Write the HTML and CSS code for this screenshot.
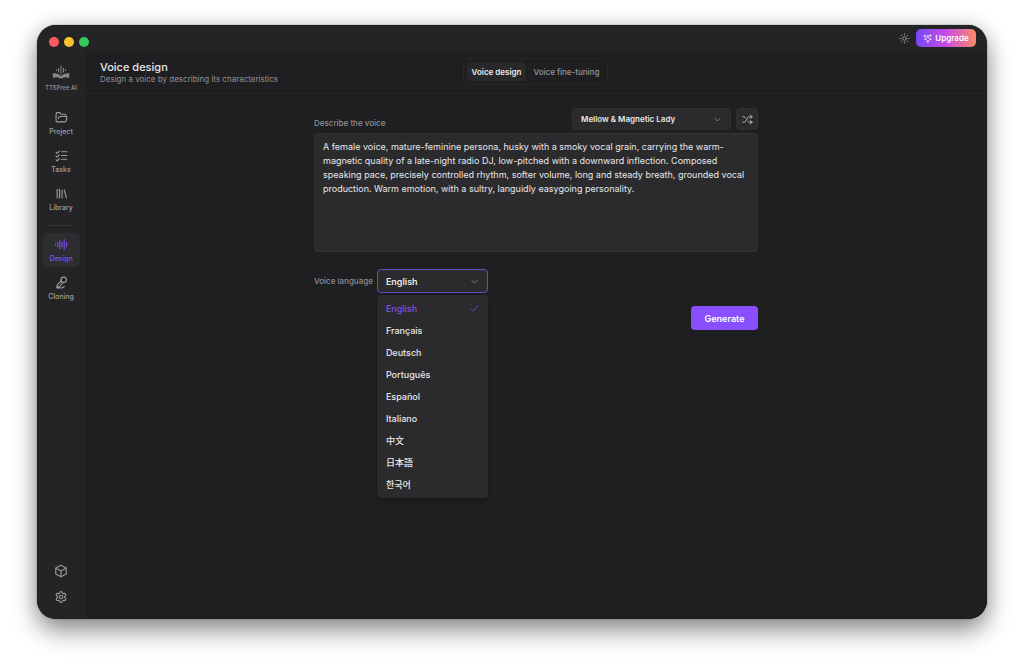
FILE: index.html
```html
<!DOCTYPE html>
<html lang="en">
<head>
    <meta charset="UTF-8">
    <meta name="viewport" content="width=device-width, initial-scale=1.0">
    <title>Voice design</title>
    <link rel="stylesheet" href="styles.css">
</head>

<body>
    <div class="window">
        <div class="titlebar">
            <div class="lights">
                <button class="light red" aria-label="Close"></button>
                <button class="light yellow" aria-label="Minimize"></button>
                <button class="light green" aria-label="Zoom"></button>
            </div>
            <div class="titlebar-actions">
                <button class="icon-button" aria-label="Toggle theme">
                    <svg class="icon theme-icon" viewBox="0 0 24 24"><circle cx="12" cy="12" r="4"/><path d="M12 2v2M12 20v2M4.9 4.9l1.4 1.4M17.7 17.7l1.4 1.4M2 12h2M20 12h2M6.3 17.7l-1.4 1.4M19.1 4.9l-1.4 1.4"/></svg>
                </button>
                <button class="upgrade">
                    <svg class="icon" viewBox="0 0 24 24"><path d="M13 4l-2 6a3 3 0 0 1-1.500 1.500L4 14l5.500 2a3 3 0 0 1 1.500 1.500L13 23l2-5.500a3 3 0 0 1 1.500-1.500L22 14l-5.500-2.500A3 3 0 0 1 15 10zM5 3v5M2 5.500h6M20 2v4M18 4h4"/></svg>
                    Upgrade
                </button>
            </div>
        </div>

        <div class="body">
            <nav class="sidebar">
                <div class="brand">
                    <svg class="brand-icon" viewBox="0 0 36 28"><path class="brand-bars" d="M9 9v3M13 6v9M18 1v18M23 6v9M27 9v3"/><path class="brand-book" d="M1 17q10-2 17 5q7-7 17-5l-1 9q-9-3-14 1h-4q-5-4-14-1z"/></svg>
                    <span>TTSFree AI</span>
                </div>
                <a class="nav-item" href="#project">
                    <svg class="icon" viewBox="0 0 24 24"><path d="M6 14l1.500-2.900A2 2 0 0 1 9.200 10H20a2 2 0 0 1 1.900 2.500l-1.500 6a2 2 0 0 1-2 1.500H4a2 2 0 0 1-2-2V5a2 2 0 0 1 2-2h3.900a2 2 0 0 1 1.700.900l.8 1.200a2 2 0 0 0 1.700.900H18a2 2 0 0 1 2 2v2"/></svg>
                    Project
                </a>
                <a class="nav-item" href="#tasks">
                    <svg class="icon" viewBox="0 0 24 24"><path d="M2 6l2 2 4-4M2 13l2 2 4-4M2 20l2 2 4-4M12 5h10M12 12h10M12 19h10"/></svg>
                    Tasks
                </a>
                <a class="nav-item" href="#library">
                    <svg class="icon" viewBox="0 0 24 24"><path d="M4 4v16M8.500 4v16M13 6v14M17 5l4 15"/></svg>
                    Library
                </a>
                <hr class="divider">
                <a class="nav-item active" href="#design">
                    <svg class="icon" viewBox="0 0 24 24"><path d="M1 11v2M5 8v8M9 4v16M13 8v8M17 3v18M21 8v8M24 11v2"/></svg>
                    Design
                </a>
                <a class="nav-item" href="#cloning">
                    <svg class="icon" viewBox="0 0 24 24"><circle cx="16" cy="7" r="5"/><path d="M11.500 8.500L4 17a2.500 2.500 0 0 0 3.500 3.500L15 12M11 7a5 5 0 0 0 5 5M5.500 19L3 22h9q4 0 5-3"/></svg>
                    Cloning
                </a>
                <div class="sidebar-bottom">
                    <button class="icon-button" aria-label="Models">
                        <svg class="icon" viewBox="0 0 24 24"><path d="M12 2l9 5v10l-9 5-9-5V7zM3 7l9 5 9-5M12 12v10"/></svg>
                    </button>
                    <button class="icon-button" aria-label="Settings">
                        <svg class="icon" viewBox="0 0 24 24"><path d="M10 4a2.300 2.300 0 0 1 4 0 2.300 2.300 0 0 0 3.400 2 2.300 2.300 0 0 1 2 4 2.300 2.300 0 0 0 0 4 2.300 2.300 0 0 1-2 4 2.300 2.300 0 0 0-3.400 2 2.300 2.300 0 0 1-4 0 2.300 2.300 0 0 0-3.400-2 2.300 2.300 0 0 1-2-4 2.300 2.300 0 0 0 0-4 2.300 2.300 0 0 1 2-4A2.300 2.300 0 0 0 10 4z"/><circle cx="12" cy="12" r="3"/></svg>
                    </button>
                </div>
            </nav>

            <main class="main">
                <header class="header">
                    <div>
                        <h1>Voice design</h1>
                        <p>Design a voice by describing its characteristics</p>
                    </div>
                    <div class="tabs" role="tablist">
                        <button class="tab selected" role="tab" aria-selected="true">Voice design</button>
                        <button class="tab" role="tab" aria-selected="false">Voice fine-tuning</button>
                    </div>
                </header>

                <form class="voice-form">
                    <div class="form-top">
                        <label for="description">Describe the voice</label>
                        <div class="select-box preset">
                            <select id="preset" aria-label="Voice preset">
                                <option>Mellow &amp; Magnetic Lady</option>
                            </select>
                            <svg class="icon chevron" viewBox="0 0 24 24"><path d="M5 9l7 7 7-7"/></svg>
                        </div>
                        <button type="button" class="shuffle" aria-label="Random voice">
                            <svg class="icon" viewBox="0 0 24 24"><path d="M18 14l4 4-4 4M18 2l4 4-4 4M2 18h2a4 4 0 0 0 3.300-1.700l5.400-8.600A4 4 0 0 1 16 6h6M2 6h2a4 4 0 0 1 3.600 2.200M22 18h-6a4 4 0 0 1-3.300-1.800l-.4-.5"/></svg>
                        </button>
                    </div>
                    <textarea id="description" spellcheck="false">A female voice, mature-feminine persona, husky with a smoky vocal grain, carrying the warm-magnetic quality of a late-night radio DJ, low-pitched with a downward inflection. Composed speaking pace, precisely controlled rhythm, softer volume, long and steady breath, grounded vocal production. Warm emotion, with a sultry, languidly easygoing personality.</textarea>

                    <div class="language-row">
                        <label for="language">Voice language</label>
                        <div class="select-box language">
                            <select id="language">
                                <option>English</option>
                            </select>
                            <svg class="icon chevron" viewBox="0 0 24 24"><path d="M5 9l7 7 7-7"/></svg>
                            <div class="menu" role="listbox" aria-label="Voice language">
                                <button type="button" class="option chosen" role="option" aria-selected="true">English
                                    <svg class="icon" viewBox="0 0 24 24"><path d="M3 13l6 6L21 5"/></svg>
                                </button>
                                <button type="button" class="option" role="option">Français</button>
                                <button type="button" class="option" role="option">Deutsch</button>
                                <button type="button" class="option" role="option">Português</button>
                                <button type="button" class="option" role="option">Español</button>
                                <button type="button" class="option" role="option">Italiano</button>
                                <button type="button" class="option" role="option" lang="zh">中文</button>
                                <button type="button" class="option" role="option" lang="ja">日本語</button>
                                <button type="button" class="option korean" role="option" lang="ko">한국어</button>
                            </div>
                        </div>
                    </div>
                    <button type="button" class="generate">Generate</button>
                </form>
            </main>
        </div>
    </div>
</body>
</html>
```
FILE: styles.css
```css
* {
    box-sizing: border-box;
}

body {
    margin: 0;
    padding: 25px 37px 49px;
    height: 100vh;
    background: #fff;
    color: #e8e8ea;
    font-family: Inter, "Noto Sans CJK SC", sans-serif;
    font-size: 9px;
}

button, select, textarea {
    font: inherit;
    color: inherit;
    border: none;
    margin: 0;
}

button {
    padding: 0;
    background: none;
    cursor: pointer;
}

.icon {
    width: 12px;
    height: 12px;
    flex: none;
    fill: none;
    stroke: currentColor;
    stroke-width: 2;
    stroke-linecap: round;
    stroke-linejoin: round;
}

.window {
    display: flex;
    flex-direction: column;
    height: 100%;
    overflow: hidden;
    background: #242426;
    border-radius: 19px;
    box-shadow: 0 0 1px #000, 0 12px 24px rgba(0, 0, 0, 0.42), 0 0 20px rgba(0, 0, 0, 0.12);
}

/* Title bar */
.titlebar {
    display: flex;
    justify-content: space-between;
    height: 27px;
    padding: 4px 11px 0 12px;
}

.lights {
    display: flex;
    gap: 5px;
    padding-top: 8px;
}

.light {
    width: 10px;
    height: 10px;
    border-radius: 50%;
}

.red { background: #ff5c60; }
.yellow { background: #fdc02f; }
.green { background: #34c759; }

.titlebar-actions {
    display: flex;
    align-items: flex-start;
    gap: 6px;
}

.icon-button {
    display: flex;
    align-items: center;
    justify-content: center;
    height: 18px;
    color: #98989b;
}

.theme-icon {
    width: 11px;
    height: 11px;
}

.upgrade {
    display: flex;
    align-items: center;
    justify-content: center;
    gap: 3px;
    width: 60px;
    height: 18px;
    border-radius: 5px;
    background: linear-gradient(90deg, #7448f5, #c84be8 50%, #f98a68);
    color: #fff;
    font-size: 8px;
    font-weight: 600;
}

.upgrade .icon {
    width: 9px;
    height: 9px;
}

.body {
    display: flex;
    flex: 1;
    min-height: 0;
}

/* Sidebar */
.sidebar {
    display: flex;
    flex-direction: column;
    align-items: center;
    width: 48px;
    padding: 13px 0;
    color: #a0a0a3;
    font-size: 7px;
    font-weight: 500;
    line-height: 8px;
}

.brand {
    display: flex;
    flex-direction: column;
    align-items: center;
    gap: 5px;
    margin-bottom: 14px;
    color: #88888b;
    font-size: 6px;
    font-weight: 600;
    white-space: nowrap;
}

.brand-icon {
    width: 18px;
    height: 14px;
}

.brand-bars {
    fill: none;
    stroke: currentColor;
    stroke-width: 2;
}

.brand-book {
    fill: currentColor;
}

.nav-item {
    display: flex;
    flex-direction: column;
    align-items: center;
    justify-content: center;
    gap: 4px;
    width: 37px;
    height: 34px;
    margin-bottom: 4px;
    border-radius: 5px;
    color: inherit;
    text-decoration: none;
}

.nav-item .icon {
    width: 13px;
    height: 13px;
}

.nav-item.active {
    background: #2d2d30;
    color: #7f50ea;
}

.divider {
    width: 24px;
    height: 1px;
    margin: 5px 0 7px;
    border: none;
    background: #363639;
}

.sidebar-bottom {
    display: flex;
    flex-direction: column;
    gap: 8px;
    margin-top: auto;
}

.sidebar-bottom .icon {
    width: 14px;
    height: 14px;
}

/* Main area */
.main {
    flex: 1;
    min-width: 0;
    background: #1f1f21;
    border-top-left-radius: 4px;
}

.header {
    display: grid;
    grid-template-columns: 1fr auto 1fr;
    align-items: center;
    height: 42px;
    padding: 0 16px 0 15px;
    border-bottom: 1px solid #262628;
}

.header h1 {
    margin: 0;
    font-size: 11px;
    font-weight: 500;
    line-height: 13px;
}

.header p {
    margin: 0;
    color: #929295;
    font-size: 8px;
    line-height: 10px;
}

.tabs {
    display: flex;
    gap: 2px;
    margin-bottom: 2px;
    padding: 3px;
    border: 1px solid #272729;
    border-radius: 5px;
}

.tab {
    height: 19px;
    padding: 0 5px;
    border-radius: 4px;
    color: #97979a;
    font-size: 8px;
    font-weight: 500;
}

.tab.selected {
    background: #28282a;
    color: #eeeef0;
    font-weight: 600;
}

/* Form */
.voice-form {
    display: flex;
    flex-direction: column;
    max-width: 444px;
    margin: 14px auto 0;
}

.voice-form label {
    color: #8e8e91;
    font-size: 8px;
    font-weight: 500;
    line-height: 10px;
}

.form-top {
    display: flex;
    align-items: flex-end;
    gap: 5px;
    margin-bottom: 3px;
}

.form-top label {
    flex: 1;
    padding-bottom: 2px;
}

.select-box {
    position: relative;
}

.select-box select {
    appearance: none;
    display: block;
    width: 100%;
    height: 22px;
    padding: 0 24px 0 8px;
    border: 1px solid #303032;
    border-radius: 4px;
    outline: none;
    background: #2b2b2d;
    font-weight: 600;
}

.chevron {
    position: absolute;
    top: 50%;
    right: 9px;
    width: 9px;
    height: 9px;
    margin-top: -4px;
    color: #98989b;
    pointer-events: none;
}

.preset {
    width: 159px;
}

.preset select {
    font-size: 8px;
}

.shuffle {
    display: flex;
    align-items: center;
    justify-content: center;
    width: 22px;
    height: 22px;
    border: 1px solid #303032;
    border-radius: 4px;
    background: #2b2b2d;
    color: #c4c4c7;
}

.shuffle .icon {
    width: 11px;
    height: 11px;
}

textarea {
    display: block;
    width: 100%;
    height: 119px;
    padding: 6px 8px;
    resize: none;
    border: 1px solid #343436;
    border-radius: 4px;
    outline: none;
    background: #2b2b2d;
    line-height: 14px;
}

.language-row {
    display: flex;
    align-items: center;
    gap: 4px;
    margin-top: 17px;
}

.language {
    width: 111px;
}

.language select {
    height: 24px;
    border-color: #6e49c4;
}

.menu {
    position: absolute;
    top: 100%;
    left: 0;
    right: 0;
    display: flex;
    flex-direction: column;
    height: 203px;
    margin-top: 2px;
    padding: 3px 0;
    border-radius: 4px;
    background: #2b2b2d;
    box-shadow: 0 2px 6px rgba(0, 0, 0, 0.2);
}

.option {
    display: flex;
    flex: 1;
    align-items: center;
    justify-content: space-between;
    padding: 0 9px;
    font-weight: 500;
}

.option.chosen {
    color: #8050e8;
}

.option .icon {
    width: 9px;
    height: 9px;
}

.korean {
    font-family: "Noto Sans CJK KR", sans-serif;
}

.generate {
    align-self: flex-end;
    width: 67px;
    height: 24px;
    margin-top: 13px;
    border-radius: 4px;
    background: #894fff;
    color: #fff;
    font-weight: 600;
}
```
